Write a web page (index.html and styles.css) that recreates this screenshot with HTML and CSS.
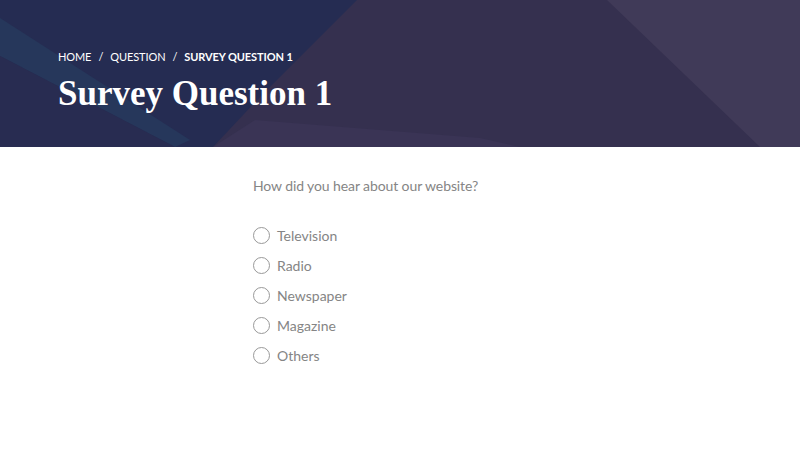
FILE: index.html
```html
<!DOCTYPE html>
<html>
<head>
<meta charset="utf-8">
<link rel="stylesheet" href="styles.css">
</head>
<body>
<header class="hero">
  <svg class="hero-bg" width="800" height="147" viewBox="0 0 800 147" preserveAspectRatio="none">
    <rect x="0" y="0" width="800" height="147" fill="#252c52"/>
    <polygon points="0,18 190,140 175,147 0,56" fill="#26375b"/>
    <polygon points="0,56 175,147 0,147" fill="#282c51"/>
    <polygon points="357,0 800,0 800,147 213,147 262,95" fill="#35304f"/>
    <polygon points="607,0 800,0 800,147 760,147" fill="#403a58"/>
    <polygon points="213,147 255,120 480,138 520,147" fill="#3a3455"/>
  </svg>
  <div class="hero-inner">
    <nav class="crumbs">
      <span>HOME</span><span class="sep">/</span><span>QUESTION</span><span class="sep">/</span><span class="current">SURVEY QUESTION 1</span>
    </nav>
    <h1 class="title">Survey Question 1</h1>
  </div>
</header>
<main class="survey">
  <p class="question">How did you hear about our website?</p>
  <ul class="options">
    <li class="option"><span class="radio"></span><span>Television</span></li>
    <li class="option"><span class="radio"></span><span>Radio</span></li>
    <li class="option"><span class="radio"></span><span>Newspaper</span></li>
    <li class="option"><span class="radio"></span><span>Magazine</span></li>
    <li class="option"><span class="radio"></span><span>Others</span></li>
  </ul>
</main>
</body>
</html>
```

FILE: styles.css
```css
* { box-sizing: border-box; }
html, body { margin: 0; padding: 0; background: #fff; }
body { font-family: Lato, "Open Sans", sans-serif; width: 800px; height: 458px; overflow: hidden; }

.hero {
  position: relative;
  height: 147px;
  overflow: hidden;
}
.hero-bg {
  position: absolute;
  left: 0;
  top: 0;
  display: block;
}
.hero-inner {
  position: relative;
  padding: 50px 0 0 58px;
}
.crumbs {
  font-family: Lato, sans-serif;
  font-size: 11px;
  color: #fff;
  line-height: 14px;
  display: flex;
  letter-spacing: -0.1px;
}
.crumbs .sep { margin: 0 7px; }
.crumbs .current { font-weight: 700; }
.title {
  margin: 8px 0 0;
  font-family: "Liberation Serif", "Times New Roman", serif;
  font-weight: 700;
  font-size: 35px;
  line-height: 44px;
  color: #fff;
}

.survey {
  padding: 0 0 0 253px;
}
.question {
  margin: 30px 0 0;
  font-size: 14px;
  line-height: 18px;
  letter-spacing: -0.1px;
  color: #858585;
}
.options {
  list-style: none;
  margin: 31px 0 0;
  padding: 0;
  display: flex;
  flex-direction: column;
  gap: 12px;
}
.option {
  display: flex;
  align-items: center;
  gap: 7px;
  height: 18px;
  font-size: 14px;
  color: #858585;
}
.radio {
  width: 17px;
  height: 17px;
  border: 1px solid #999;
  border-radius: 50%;
  flex: none;
}
```
